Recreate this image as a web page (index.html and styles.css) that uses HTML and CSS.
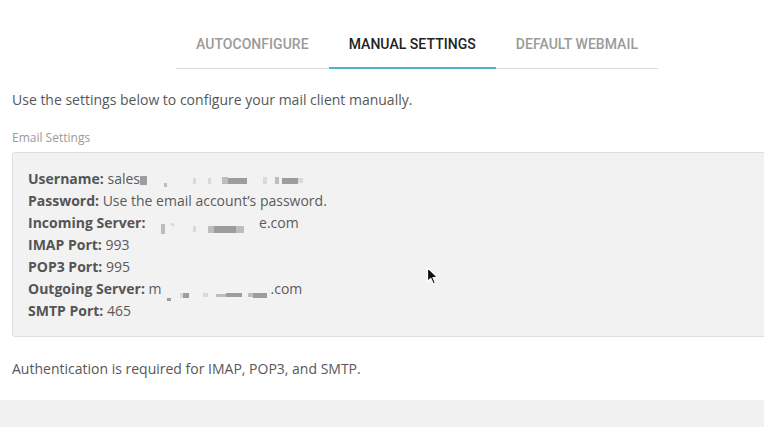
FILE: index.html
```html
<!DOCTYPE html>
<html lang="en">
<head>
<meta charset="utf-8">
<title>Manual Settings</title>
<link rel="stylesheet" href="styles.css">
</head>
<body>
<nav class="tabs">
  <div class="tab">Autoconfigure</div>
  <div class="tab active">Manual Settings</div>
  <div class="tab">Default Webmail</div>
</nav>
<main class="content">
  <p class="intro">Use the settings below to configure your mail client manually.</p>
  <div class="section-label">Email Settings</div>
  <div class="settings-box">
    <div class="row"><b>Username:</b> sales<span class="blur"><i class="px d w7 h9"></i><i class="w17"></i><i class="px m w3 h4 low"></i><i class="w26"></i><i class="px l w3 h6"></i><i class="w12"></i><i class="px l w3 h6"></i><i class="w11"></i><i class="px m w6 h7"></i><i class="px d w19 h6"></i><i class="w16"></i><i class="px l w4 h7"></i><i class="w8"></i><i class="px m w4 h7"></i><i class="w3"></i><i class="px d w16 h6"></i><i class="px l w5 h5"></i></span></div>
    <div class="row"><b>Password:</b> Use the email account’s password.</div>
    <div class="row"><b>Incoming Server:</b> <span class="blur"><i class="w12"></i><i class="px m w4 h10"></i><i class="w6"></i><i class="px l w3 h3 up"></i><i class="w19"></i><i class="px l w3 h6"></i><i class="w12"></i><i class="px m w6 h7"></i><i class="px d w22 h7"></i><i class="px m w8 h7"></i><i class="w15"></i></span>e.com</div>
    <div class="row"><b>IMAP Port:</b> 993</div>
    <div class="row"><b>POP3 Port:</b> 995</div>
    <div class="row"><b>Outgoing Server:</b> m<span class="blur"><i class="w5"></i><i class="px d w4 h3 low"></i><i class="w9"></i><i class="px l w3 h5"></i><i class="px d w6 h5"></i><i class="w4"></i><i class="w10"></i><i class="px l w5 h4"></i><i class="w8"></i><i class="px m w10 h3"></i><i class="px d w16 h4"></i><i class="w6"></i><i class="px m w5 h4"></i><i class="px d w14 h5"></i><i class="w4"></i></span>.com</div>
    <div class="row"><b>SMTP Port:</b> 465</div>
  </div>
  <p class="note">Authentication is required for IMAP, POP3, and SMTP.</p>
</main>
<footer class="band"></footer>
<svg class="cursor" width="14" height="20" viewBox="0 0 14 20" aria-hidden="true">
  <path d="M1.5 1.5 L1.5 15.5 L4.8 12.4 L7.3 18 L9.4 17 L7 11.6 L11.6 11.6 Z" fill="#111" stroke="#fff" stroke-width="1.2" stroke-linejoin="round"/>
</svg>
</body>
</html>
```

FILE: styles.css
```css
html, body {
  margin: 0;
  padding: 0;
  background: #fff;
  overflow: hidden;
}
body {
  width: 764px;
  height: 427px;
  position: relative;
  font-family: "Open Sans", "Liberation Sans", sans-serif;
  color: #575757;
}
.tabs {
  display: flex;
  margin: 20px 0 0 176px;
  width: 482px;
  border-bottom: 1px solid #dcdcdc;
}
.tab {
  position: relative;
  flex: none;
  white-space: nowrap;
  padding: 14px 20px;
  line-height: 20px;
  font-family: Roboto, "Liberation Sans", sans-serif;
  font-weight: 500;
  font-size: 14px;
  letter-spacing: 0.04px;
  text-transform: uppercase;
  color: #9a9a9a;
}
.tab.active {
  color: #222;
}
.tab.active::after {
  content: "";
  position: absolute;
  left: 0;
  right: 0;
  bottom: -1px;
  height: 2px;
  background: #4eb3c4;
}
.content {
  padding: 0 0 0 12px;
}
.intro {
  margin: 21px 0 0;
  font-size: 14px;
  line-height: 20px;
  color: #575757;
}
.section-label {
  margin-top: 20px;
  font-size: 12px;
  line-height: 16px;
  color: #9b9b9b;
}
.settings-box {
  margin-top: 6px;
  margin-right: -30px;
  background: #f2f2f2;
  border: 1px solid #dedede;
  border-radius: 3px;
  padding: 15px 15px 14px;
}
.row {
  height: 22px;
  font-size: 14px;
  line-height: 22px;
  color: #5a5a5a;
  white-space: nowrap;
}
.row b {
  font-weight: 700;
  color: #555;
}
.note {
  margin: 22px 0 0;
  font-size: 14px;
  line-height: 20px;
  color: #575757;
}
.band {
  position: absolute;
  left: 0;
  right: 0;
  top: 400px;
  height: 27px;
  background: #f1f1f1;
}
.blur {
  display: inline-flex;
  align-items: center;
  height: 12px;
  line-height: 0;
  vertical-align: -1px;
}
.blur i {
  display: block;
  flex: none;
}
.px.d { background: #9d9d9d; }
.px.m { background: #bdbdbd; }
.px.l { background: #dadada; }
.px.low { align-self: flex-end; }
.px.up { align-self: flex-start; }
.w3 { width: 3px; } .w4 { width: 4px; } .w5 { width: 5px; } .w6 { width: 6px; }
.w7 { width: 7px; } .w8 { width: 8px; } .w9 { width: 9px; } .w10 { width: 10px; }
.w11 { width: 11px; } .w12 { width: 12px; } .w14 { width: 14px; } .w15 { width: 15px; }
.w16 { width: 16px; } .w17 { width: 17px; } .w19 { width: 19px; } .w22 { width: 22px; }
.w26 { width: 26px; }
.h3 { height: 3px; } .h4 { height: 4px; } .h5 { height: 5px; } .h6 { height: 6px; }
.h7 { height: 7px; } .h9 { height: 9px; } .h10 { height: 10px; }
.cursor {
  position: absolute;
  left: 426px;
  top: 266px;
}
```
